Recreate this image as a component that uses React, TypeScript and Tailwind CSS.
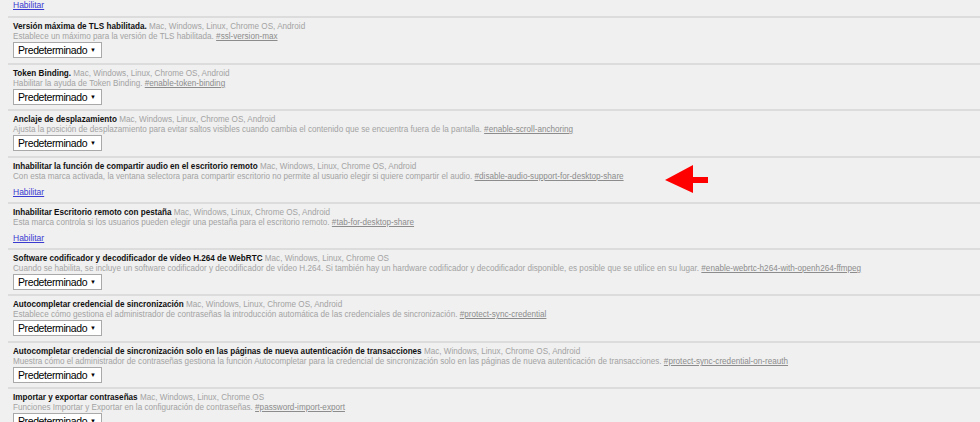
import React from "react";

type Row = {
  title: string;
  platforms: string;
  desc: string;
  tag: string;
  kind: "select" | "link";
  h: string;
  arrow?: boolean;
};

const ALL = "Mac, Windows, Linux, Chrome OS, Android";
const NOAND = "Mac, Windows, Linux, Chrome OS";

const rows: Row[] = [
  {
    title: "Versión máxima de TLS habilitada.",
    platforms: ALL,
    desc: "Establece un máximo para la versión de TLS habilitada.",
    tag: "#ssl-version-max",
    kind: "select",
    h: "h-[47px]",
  },
  {
    title: "Token Binding.",
    platforms: ALL,
    desc: "Habilitar la ayuda de Token Binding.",
    tag: "#enable-token-binding",
    kind: "select",
    h: "h-[46px]",
  },
  {
    title: "Anclaje de desplazamiento",
    platforms: ALL,
    desc: "Ajusta la posición de desplazamiento para evitar saltos visibles cuando cambia el contenido que se encuentra fuera de la pantalla.",
    tag: "#enable-scroll-anchoring",
    kind: "select",
    h: "h-[47px]",
  },
  {
    title: "Inhabilitar la función de compartir audio en el escritorio remoto",
    platforms: ALL,
    desc: "Con esta marca activada, la ventana selectora para compartir escritorio no permite al usuario elegir si quiere compartir el audio.",
    tag: "#disable-audio-support-for-desktop-share",
    kind: "link",
    h: "h-[46px]",
    arrow: true,
  },
  {
    title: "Inhabilitar Escritorio remoto con pestaña",
    platforms: ALL,
    desc: "Esta marca controla si los usuarios pueden elegir una pestaña para el escritorio remoto.",
    tag: "#tab-for-desktop-share",
    kind: "link",
    h: "h-[46px]",
  },
  {
    title: "Software codificador y decodificador de vídeo H.264 de WebRTC",
    platforms: NOAND,
    desc: "Cuando se habilita, se incluye un software codificador y decodificador de vídeo H.264. Si también hay un hardware codificador y decodificador disponible, es posible que se utilice en su lugar.",
    tag: "#enable-webrtc-h264-with-openh264-ffmpeg",
    kind: "select",
    h: "h-[46px]",
  },
  {
    title: "Autocompletar credencial de sincronización",
    platforms: ALL,
    desc: "Establece cómo gestiona el administrador de contraseñas la introducción automática de las credenciales de sincronización.",
    tag: "#protect-sync-credential",
    kind: "select",
    h: "h-[47px]",
  },
  {
    title: "Autocompletar credencial de sincronización solo en las páginas de nueva autenticación de transacciones",
    platforms: ALL,
    desc: "Muestra cómo el administrador de contraseñas gestiona la función Autocompletar para la credencial de sincronización solo en las páginas de nueva autenticación de transacciones.",
    tag: "#protect-sync-credential-on-reauth",
    kind: "select",
    h: "h-[46px]",
  },
  {
    title: "Importar y exportar contraseñas",
    platforms: NOAND,
    desc: "Funciones Importar y Exportar en la configuración de contraseñas.",
    tag: "#password-import-export",
    kind: "select",
    h: "h-[46px]",
  },
];

function HabLink({ className = "" }: { className?: string }) {
  return (
    <a
      href="#"
      className={
        "block w-fit text-[8.5px] leading-[10px] text-[#3a3ad0] underline " +
        className
      }
    >
      Habilitar
    </a>
  );
}

function Select() {
  return (
    <div className="flex h-[16px] w-[89px] items-center justify-between border border-[#a9a9a9] bg-white pl-[4px] pr-[5px] text-black">
      <span className="text-[10.5px] leading-[14px] tracking-[-0.4px]">Predeterminado</span>
      <span className="text-[6px] leading-[14px]">▼</span>
    </div>
  );
}

export default function App() {
  return (
    <div
      className="h-[422px] w-[980px] overflow-hidden bg-[#f0f0f0] pl-[8px]"
      style={{ fontFamily: '"Liberation Sans", Arial, sans-serif' }}
    >
      <div className="h-[16px] pl-[5px]">
        <HabLink />
      </div>
      {rows.map((r, i) => (
        <div
          key={i}
          className={"relative border-t-2 border-[#dcdcdc] pl-[5px] pt-[3px] " + r.h}
        >
          <div className="whitespace-nowrap text-[8.15px] leading-[11px]">
            <span className="font-bold text-[#111]">{r.title}</span>{" "}
            <span className="text-[#a3a3a3]">{r.platforms}</span>
          </div>
          <div className="whitespace-nowrap text-[8.15px] leading-[10px] text-[#a3a3a3]">
            {r.desc}{" "}
            <a href="#" className="text-[#8c8c8c] underline">
              {r.tag}
            </a>
          </div>
          {r.kind === "select" ? <Select /> : <HabLink className="mt-[5px]" />}
          {r.arrow && (
            <svg
              className="absolute left-[657px] top-[7px]"
              width="44"
              height="28"
              viewBox="0 0 44 28"
            >
              <polygon
                points="0,15 28,0 28,12 43,12 43,18 28,18 28,28"
                fill="#ff0000"
              />
            </svg>
          )}
        </div>
      ))}
    </div>
  );
}
